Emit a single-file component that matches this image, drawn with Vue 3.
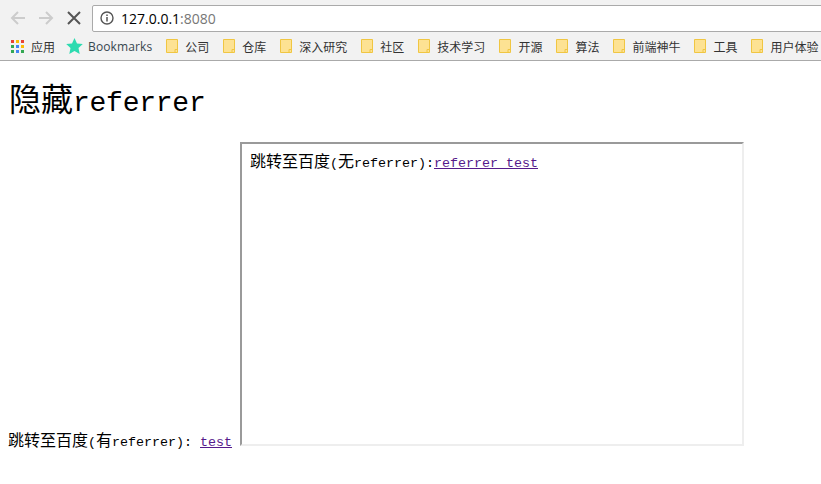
<script setup>
const folders = ['公司', '仓库', '深入研究', '社区', '技术学习', '开源', '算法', '前端神牛', '工具', '用户体验']
const dots = ['#e94335', '#fbbc05', '#e94335', '#34a853', '#4285f4', '#fbbc05', '#34a853', '#4285f4', '#34a853']
</script>

<template>
  <div class="page">
    <header class="chrome">
      <div class="toolbar">
        <svg class="nav nav-back" width="18" height="18" viewBox="0 0 18 18"><path d="M16 9H3M9 3L3 9l6 6" fill="none" stroke="#ccc" stroke-width="2"/></svg>
        <svg class="nav nav-fwd" width="18" height="18" viewBox="0 0 18 18"><path d="M2 9h13M9 3l6 6-6 6" fill="none" stroke="#ccc" stroke-width="2"/></svg>
        <svg class="nav nav-stop" width="18" height="18" viewBox="0 0 18 18"><path d="M3 3l12 12M15 3L3 15" fill="none" stroke="#555" stroke-width="2"/></svg>
        <div class="omnibox">
          <svg width="14" height="14" viewBox="0 0 14 14"><circle cx="7" cy="7" r="6" fill="none" stroke="#555" stroke-width="1.4"/><path d="M7 6v4.4M7 3.4v1.5" stroke="#555" stroke-width="1.5"/></svg>
          <span class="url">127.0.0.1<span class="port">:8080</span></span>
        </div>
      </div>
      <nav class="bookmarks">
        <span class="mark apps">
          <span class="grid"><i v-for="(c, i) in dots" :key="i" :style="{ background: c }"></i></span>
          <span>应用</span>
        </span>
        <span class="mark star">
          <svg width="17" height="16" viewBox="0 0 17 16"><path d="M8.5 0l2.5 5.400 5.800.7-4.300 4 1.200 5.800-5.200-2.900-5.200 2.900 1.200-5.800-4.300-4 5.800-.7z" fill="#2ddbb0"/></svg>
          <span class="latin">Bookmarks</span>
        </span>
        <span v-for="f in folders" :key="f" class="mark folder">
          <svg width="12" height="14" viewBox="0 0 12 14"><path d="M.5.500h11v13H.5z" fill="#fde293" stroke="#f0c642"/><path d="M9 13.500v-3h2.500" fill="none" stroke="#f0c642"/></svg>
          <span>{{ f }}</span>
        </span>
      </nav>
    </header>
    <main class="content">
      <h1 class="title">隐藏<span class="h-latin">referrer</span></h1>
      <div class="demo">
        <span class="outer">跳转至百度<span class="t-latin">(</span>有<span class="t-latin">referrer): </span><a class="t-latin link" href="#">test</a></span>
        <div class="frame">
          <span>跳转至百度<span class="t-latin">(</span>无<span class="t-latin">referrer):</span><a class="t-latin link" href="#">referrer test</a></span>
        </div>
      </div>
    </main>
  </div>
</template>

<style scoped>
.page {
  width: 821px;
  height: 484px;
  overflow: hidden;
  background: #fff;
  font-family: "Noto Sans CJK SC", sans-serif;
  color: #000;
}
.chrome {
  height: 61px;
  background: #f2f2f2;
  border-bottom: 1px solid #aaa;
  box-sizing: border-box;
}
.toolbar {
  height: 32px;
  display: flex;
  align-items: center;
  padding-top: 4px;
  box-sizing: border-box;
}
.nav { flex: none; }
.nav-back { margin-left: 9px; }
.nav-fwd { margin-left: 10px; }
.nav-stop { margin-left: 10px; }
.omnibox {
  margin-left: 9px;
  flex: 1;
  height: 27px;
  margin-right: -4px;
  box-sizing: border-box;
  background: #fff;
  border: 1px solid #aaa;
  border-radius: 2px;
  display: flex;
  align-items: center;
  padding-left: 7px;
  gap: 7px;
}
.url {
  font-family: "Open Sans", sans-serif;
  font-size: 14px;
  color: #000;
}
.port { color: #777; }
.bookmarks {
  height: 28px;
  display: flex;
  align-items: center;
  padding-left: 11px;
  gap: 14px;
  white-space: nowrap;
  font-size: 12px;
  color: #333;
}
.mark { display: flex; align-items: center; flex: none; }
.folder { gap: 7px; }
.star { gap: 5px; margin-left: -1px; }
.apps { gap: 7px; margin-right: -2px; }
.latin { font-family: "Open Sans", sans-serif; font-size: 12px; letter-spacing: .12px; color: #37474f; }
.grid {
  display: grid;
  grid-template-columns: repeat(3, 3px);
  gap: 2px;
}
.grid i { width: 3px; height: 3px; display: block; }
.content { padding: 0 8px; }
.title {
  margin: 18px 0 0;
  padding-left: 1px;
  font-size: 32px;
  line-height: 37px;
  font-weight: 400;
  white-space: nowrap;
}
.h-latin { font-family: "Liberation Mono", monospace; font-size: 28px; letter-spacing: -.25px; }
.t-latin { font-family: "Liberation Mono", monospace; font-size: 13.33px; }
.demo {
  margin-top: 20px;
  font-size: 16px;
  line-height: 18px;
  white-space: nowrap;
}
.outer { display: inline-block; width: 224px; margin-right: 8px; }
.link { color: #551a8b; text-decoration: underline; }
.frame {
  display: inline-block;
  overflow: hidden;
  width: 504px;
  height: 304px;
  box-sizing: border-box;
  border: 2px solid;
  border-color: #9a9a9a #eee #eee #9a9a9a;
  padding: 7px 8px;
  white-space: nowrap;
}
</style>
